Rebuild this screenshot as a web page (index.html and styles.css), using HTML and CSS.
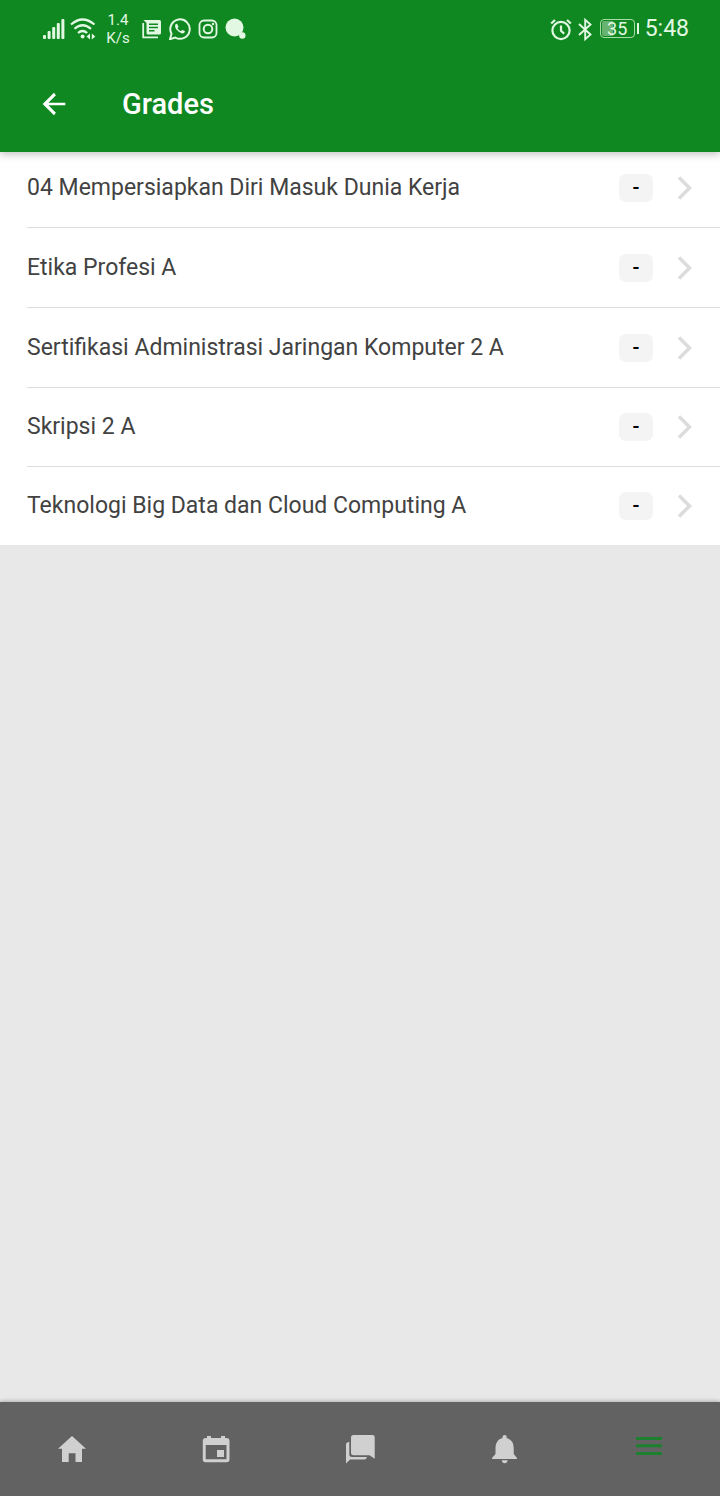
FILE: index.html
```html
<!DOCTYPE html>
<html lang="en">
<head>
<meta charset="utf-8">
<meta name="viewport" content="width=device-width, initial-scale=1">
<title>Grades</title>
<link rel="stylesheet" href="styles.css">
</head>
<body>
<div class="app">
  <header class="header">
    <div class="status">
      <div class="status-left">
        <svg class="signal" width="22" height="22" viewBox="0 0 22 22" fill="currentColor"><rect x="0" y="17" width="3" height="4" rx="1"/><rect x="4.6" y="13" width="3" height="8" rx="1"/><rect x="9.2" y="9" width="3" height="12" rx="1"/><rect x="13.8" y="5" width="3" height="16" rx="1"/><rect x="18.4" y="1" width="3" height="20" rx="1"/></svg>
        <svg class="wifi" width="26" height="22" viewBox="0 0 26 22" fill="none" stroke="currentColor" stroke-width="2.2"><path d="M1 6.5Q12.500-3.500 24.500 6.500M4.500 10.800Q12.500 3.700 21 10.800M8 15Q12.500 11 17.200 15"/><circle cx="12.600" cy="18.600" r="2" fill="currentColor" stroke="none"/><path d="M20 15.500v6l-3.500-3zM21.800 15.500v6l3.500-3z" fill="currentColor" stroke="none"/></svg>
        <div class="speed"><span>1.4</span><span>K/s</span></div>
        <svg class="news" width="20" height="22" viewBox="0 0 20 22"><path d="M1.200 5v14.300H16" fill="none" stroke="currentColor" stroke-width="1.800"/><path d="M1.500 2H17.500q1.500 0 1.500 1.500V15q0 1.500-1.500 1.500H6Q4.500 16.500 4.500 15V5z" fill="currentColor"/><path d="M7 6.200h9M7 9.500h9M7 12.800h5.500" stroke="#0f8822" stroke-width="1.500"/></svg>
        <svg class="whatsapp" width="22" height="22" viewBox="1 1 22 22" fill="none" stroke="currentColor" stroke-width="2"><path d="M2 22.200 3.500 16.700A9.700 9.700 0 1 1 7.200 20.500z"/><path d="M8.200 6.700c-2 1.200-1.200 4.300 1.300 6.900 2.700 2.700 5.900 4 7.300 1.500.3-.6.200-1-.2-1.200l-2.100-1c-.7-.2-1.100 1.200-1.700 1.200-1-.2-2.900-1.900-3.200-2.900.1-.5 1.100-1 .8-1.700l-.9-2.100c-.2-.6-.7-.9-1.300-.7z" fill="currentColor" stroke="none"/></svg>
        <svg class="insta" width="20" height="20" viewBox="0 0 20 20" fill="none" stroke="currentColor" stroke-width="1.800"><rect x="1.500" y="1.500" width="17" height="17" rx="4.500"/><circle cx="10" cy="10" r="4.300" stroke-width="2"/><circle cx="15" cy="5" r="1.200" fill="currentColor" stroke="none"/></svg>
        <svg class="bubble" width="22" height="22" viewBox="0 0 22 22" fill="currentColor"><circle cx="9.500" cy="9.500" r="9"/><circle cx="17.300" cy="17.500" r="3.200"/></svg>
      </div>
      <div class="status-right">
        <svg class="alarm" width="22" height="24" viewBox="0 0 22 24" fill="none" stroke="currentColor" stroke-width="2.200"><circle cx="11" cy="13.500" r="8.600"/><path d="M11 8.500v5.200l3.200 3M1.200 6.500 5 3M20.800 6.500 17 3"/></svg>
        <svg class="bluetooth" width="14" height="24" viewBox="0 0 14 24" fill="none" stroke="currentColor" stroke-width="1.900"><path d="M1 7 12.500 17.500 7.200 22.200V2.800L12.500 7.500 1 18"/></svg>
        <div class="battery"><span class="battery-level">35</span></div>
        <time class="clock">5:48</time>
      </div>
    </div>
    <div class="toolbar">
      <button class="back" aria-label="Back"><svg width="32" height="32" viewBox="0 0 24 24" fill="currentColor"><path d="M20.500 11H7.830l5.590-5.590L12 3.500 3.500 12l8.500 8.500 1.410-1.910L7.830 13H20.500z"/></svg></button>
      <h1 class="title">Grades</h1>
    </div>
  </header>
  <main class="content">
    <ul class="courses">
      <li><a class="course" href="#"><span class="name">04 Mempersiapkan Diri Masuk Dunia Kerja</span><span class="badge">-</span><svg class="chevron" width="16" height="24" viewBox="0 0 16 24"><path d="M2 1.500 12.500 12 2 22.500"/></svg></a></li>
      <li><a class="course" href="#"><span class="name">Etika Profesi A</span><span class="badge">-</span><svg class="chevron" width="16" height="24" viewBox="0 0 16 24"><path d="M2 1.500 12.500 12 2 22.500"/></svg></a></li>
      <li><a class="course" href="#"><span class="name">Sertifikasi Administrasi Jaringan Komputer 2 A</span><span class="badge">-</span><svg class="chevron" width="16" height="24" viewBox="0 0 16 24"><path d="M2 1.500 12.500 12 2 22.500"/></svg></a></li>
      <li><a class="course" href="#"><span class="name">Skripsi 2 A</span><span class="badge">-</span><svg class="chevron" width="16" height="24" viewBox="0 0 16 24"><path d="M2 1.500 12.500 12 2 22.500"/></svg></a></li>
      <li><a class="course" href="#"><span class="name">Teknologi Big Data dan Cloud Computing A</span><span class="badge">-</span><svg class="chevron" width="16" height="24" viewBox="0 0 16 24"><path d="M2 1.500 12.500 12 2 22.500"/></svg></a></li>
    </ul>
  </main>
  <nav class="tabs" aria-label="Main">
    <button class="tab" aria-label="Home"><svg width="32" height="32" viewBox="0 0 32 32" fill="currentColor"><path d="M16 3 30 15.800H26V29H19.500V20.300H12.700V29H6V15.800H2z"/></svg></button>
    <button class="tab" aria-label="Calendar"><svg width="32" height="32" viewBox="0 0 32 32" fill="currentColor"><path fill-rule="evenodd" d="M7 3h4V5H21V3h4V5h1.500q3 0 3 3V26.500q0 2.700-3 2.700h-21q-2.700 0-2.700-2.700V8q0-3 2.700-3H7zM5.700 12V26.200H26.500V12z"/><path d="M17 17h7v7h-7z"/></svg></button>
    <button class="tab" aria-label="Messages"><svg width="32" height="32" viewBox="0 0 32 32" fill="currentColor"><path d="M9.500 2h19q2.200 0 2.200 2.200V25.700L25.500 22.300H9.500Q7 22.300 7 20V4.500q0-2.500 2.500-2.500z"/><path d="M5.300 9V21.500q0 2.500 3 2.500H23Q22.500 26.500 20 26.500H6L2 30.500V11.500q0-2.500 3.300-2.500z"/></svg></button>
    <button class="tab" aria-label="Notifications"><svg width="32" height="32" viewBox="0 0 32 32" fill="currentColor"><path d="M16.700 2q2 0 2 2v1q7 2 7 9.500v6.500l3.300 4v1h-25v-1l3.500-4V14.500q0-7.500 7-9.500v-1q0-2 2.200-2zM13.700 27.300h6q-.5 3-3 3t-3-3z"/></svg></button>
    <button class="tab tab-active" aria-label="More"><svg width="32" height="32" viewBox="0 0 32 32" fill="currentColor"><path d="M4 4h26v3H4zM4 11.300h26v3H4zM4 19h26v3H4z"/></svg></button>
  </nav>
</div>
</body>
</html>
```
FILE: styles.css
```css
* {
  box-sizing: border-box;
}

body {
  margin: 0;
  font-family: Roboto, "Noto Sans", sans-serif;
  color: #424242;
  background: #e8e8e8;
}

button {
  padding: 0;
  border: 0;
  background: none;
  color: inherit;
  font: inherit;
}

svg {
  display: block;
  flex: none;
}

.app {
  display: flex;
  flex-direction: column;
  min-height: 100vh;
}

.header {
  position: relative;
  z-index: 1;
  color: #fff;
  background: #0f8822;
  box-shadow: 0 2px 8px rgba(0, 0, 0, 0.26);
}

.status {
  display: flex;
  align-items: center;
  justify-content: space-between;
  height: 56px;
  padding: 1px 31px 0 43px;
  color: #e2f8e2;
}

.status-left,
.status-right {
  display: flex;
  align-items: center;
}

.status-left {
  gap: 7px;
}

.status-right {
  gap: 6px;
}

.wifi {
  margin-left: -2px;
}

.speed {
  display: flex;
  flex-direction: column;
  align-items: center;
  width: 26px;
  margin: 0 4px 0 2px;
  font-size: 15px;
  line-height: 18px;
}

.battery {
  display: flex;
  align-items: center;
  margin-left: 2px;
}

.battery::after {
  content: "";
  width: 2px;
  height: 11px;
  margin-left: 2px;
  background: #e2f8e2;
}

.battery-level {
  width: 35px;
  height: 19px;
  border: 1px solid #a5dca8;
  border-radius: 4px;
  background: linear-gradient(90deg, #68b36f 35%, transparent 35%) content-box;
  padding: 1px;
  font-size: 18px;
  line-height: 16px;
  text-align: center;
}

.clock {
  font-size: 23px;
  line-height: 28px;
}

.toolbar {
  display: flex;
  align-items: center;
  gap: 52px;
  height: 96px;
  padding: 0 38px;
}

.title {
  margin: 0;
  font-size: 29px;
  line-height: 36px;
  font-weight: 500;
}

.content {
  flex: 1;
}

.courses {
  margin: -4px 0 0;
  padding: 0;
  list-style: none;
  background: #fff;
}

.course {
  display: flex;
  align-items: center;
  min-height: 80px;
  margin-left: 27px;
  padding-right: 27px;
  border-bottom: 1px solid #dedede;
  color: inherit;
  text-decoration: none;
}

li:nth-last-child(2) .course {
  min-height: 79px;
}

li:last-child .course {
  min-height: 78px;
  border-bottom: 0;
}

.name {
  flex: 1;
  font-size: 23px;
  line-height: 32px;
}

.badge {
  width: 34px;
  margin-right: 24px;
  border-radius: 7px;
  background: #f4f4f4;
  color: #000;
  font-size: 19px;
  line-height: 28px;
  font-weight: 700;
  text-align: center;
}

.chevron {
  fill: none;
  stroke: #dcdcdc;
  stroke-width: 3.5px;
}

.tabs {
  display: grid;
  grid-template-columns: repeat(5, 1fr);
  height: 94px;
  color: #d0d0d0;
  background: #626262;
  box-shadow: 0 -1px 4px rgba(0, 0, 0, 0.25);
}

.tab {
  display: grid;
  place-items: center;
}

.tab-active {
  color: #1c812e;
}
```
